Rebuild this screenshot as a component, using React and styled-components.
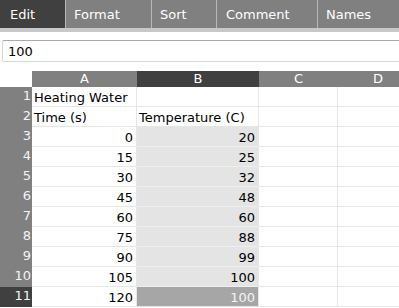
import React from "react";
import styled, { createGlobalStyle } from "styled-components";

const Global = createGlobalStyle`
  html, body { margin: 0; padding: 0; background: #fff; }
  body { font-family: "DejaVu Sans", Verdana, sans-serif; font-size: 13px; }
`;

const Page = styled.div`
  width: 399px;
  height: 308px;
  overflow: hidden;
  display: flex;
  flex-direction: column;
`;

const MenuBar = styled.div`
  display: flex;
  height: 28px;
  background: #808080;
  flex-shrink: 0;
`;

const Tab = styled.div`
  width: ${(p) => p.$w}px;
  flex-shrink: 0;
  box-sizing: border-box;
  padding-left: ${(p) => p.$pl}px;
  background: ${(p) => (p.$active ? "#404040" : "#808080")};
  border-right: 1px solid #b8b8b8;
  color: #fff;
  display: flex;
  align-items: center;
  font-size: 13px;
`;

const Strip = styled.div`
  height: 4px;
  background: #c8c8c8;
  flex-shrink: 0;
`;

const Formula = styled.div`
  margin: 8px 0 0 2px;
  height: 22px;
  box-sizing: border-box;
  width: 410px;
  border: 1px solid #d6d6d6;
  border-top-color: #a8a8b0;
  border-radius: 2px;
  padding-left: 5px;
  display: flex;
  align-items: center;
  font-size: 13px;
  color: #000;
  flex-shrink: 0;
`;

const Sheet = styled.div`
  margin-top: 9px;
  display: grid;
  grid-template-columns: 32px 105px 122px 79px 80px;
  grid-auto-rows: 20px;
  grid-template-rows: 16px;
`;

const Corner = styled.div`
  background: #fff;
`;

const ColHead = styled.div`
  background: ${(p) => (p.$sel ? "#404040" : "#808080")};
  color: #fff;
  display: flex;
  align-items: center;
  justify-content: center;
  font-size: 13px;
  line-height: 16px;
`;

const RowHead = styled.div`
  background: ${(p) => (p.$sel ? "#404040" : "#808080")};
  color: #f4f4f4;
  display: flex;
  align-items: flex-start;
  justify-content: flex-end;
  padding: 1px 1px 0 0;
  box-sizing: border-box;
  font-size: 13px;
  line-height: 16px;
  border-bottom: 1px solid transparent;
`;

const Cell = styled.div`
  box-sizing: border-box;
  border-right: 1px solid #e6e6e6;
  border-bottom: 1px solid ${(p) => (p.$tone === "light" ? "#efefef" : "#e6e6e6")};
  background: ${(p) =>
    p.$tone === "light" ? "#e4e4e4" : p.$tone === "dark" ? "#a6a6a6" : "#fff"};
  color: ${(p) => (p.$tone === "dark" ? "#f4f4f4" : "#000")};
  display: flex;
  align-items: center;
  justify-content: ${(p) => (p.$num ? "flex-end" : "flex-start")};
  padding: ${(p) => (p.$num ? "2px 3px 0 0" : "2px 0 0 2px")};
  font-size: 13px;
  white-space: nowrap;
  overflow: visible;
`;

const tabs = [
  { label: "Edit", w: 66, pl: 10, active: true },
  { label: "Format", w: 86, pl: 8 },
  { label: "Sort", w: 65, pl: 8 },
  { label: "Comment", w: 101, pl: 9 },
  { label: "Names", w: 90, pl: 8 },
];

const rows = [
  ["Heating Water", ""],
  ["Time (s)", "Temperature (C)"],
  [0, 20],
  [15, 25],
  [30, 32],
  [45, 48],
  [60, 60],
  [75, 88],
  [90, 99],
  [105, 100],
  [120, 100],
];

export default function App() {
  return (
    <Page>
      <Global />
      <MenuBar>
        {tabs.map((t) => (
          <Tab key={t.label} $w={t.w} $pl={t.pl} $active={t.active}>
            {t.label}
          </Tab>
        ))}
      </MenuBar>
      <Strip />
      <Formula>100</Formula>
      <Sheet>
        <Corner />
        <ColHead>A</ColHead>
        <ColHead $sel>B</ColHead>
        <ColHead>C</ColHead>
        <ColHead>D</ColHead>
        {rows.map((r, i) => {
          const isNum = typeof r[0] === "number";
          const last = i === rows.length - 1;
          const tone = isNum ? (last ? "dark" : "light") : undefined;
          return (
            <React.Fragment key={i}>
              <RowHead $sel={last}>{i + 1}</RowHead>
              <Cell $num={isNum}>{r[0]}</Cell>
              <Cell $num={isNum} $tone={tone}>{r[1]}</Cell>
              <Cell />
              <Cell />
            </React.Fragment>
          );
        })}
      </Sheet>
    </Page>
  );
}
